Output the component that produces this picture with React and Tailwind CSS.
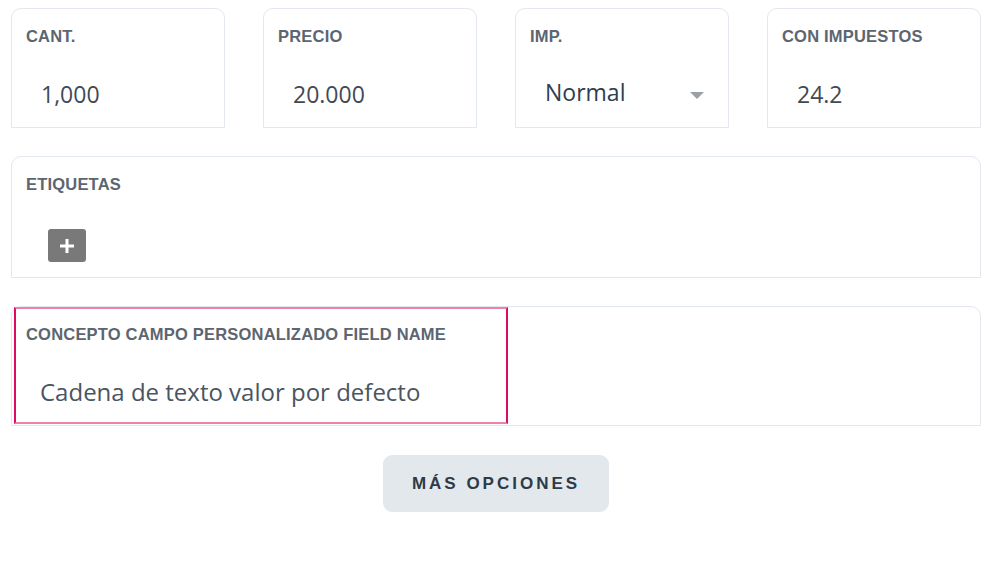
import React from "react";

const labelCls =
  "font-['Liberation_Sans',Arial,sans-serif] font-bold text-[16.5px] leading-[18px] tracking-[0.2px] text-[#5c6570] uppercase";
const valueCls =
  "font-['Open_Sans','Noto_Sans',sans-serif] text-[23px] leading-[28px] text-[#3f4a56]";

function Field({ label, value }) {
  return (
    <div className="h-[120px] rounded-t-[10px] border border-[#e2e8ee] bg-white px-[14px] pt-[18px]">
      <div className={labelCls}>{label}</div>
      <div className={`${valueCls} mt-[35px] pl-[15px]`}>{value}</div>
    </div>
  );
}

function SelectField() {
  return (
    <div className="h-[120px] rounded-t-[10px] border border-[#e2e8ee] bg-white px-[14px] pt-[18px]">
      <div className={labelCls}>IMP.</div>
      <div className="mt-[33px] flex items-center justify-between pl-[15px] pr-[10px]">
        <span className="font-['Open_Sans','Noto_Sans',sans-serif] text-[23px] leading-[28px] text-[#2c3e50]">
          Normal
        </span>
        <svg width="14" height="7" viewBox="0 0 14 7" className="mt-[6px]">
          <polygon points="0,0 14,0 7,7" fill="#9aa0a6" />
        </svg>
      </div>
    </div>
  );
}

export default function App() {
  return (
    <div className="w-[986px] h-[587px] bg-white pl-[11px] pr-[5px] pt-[8px]">
      <div className="grid grid-cols-4 gap-x-[38px]">
        <Field label="CANT." value="1,000" />
        <Field label="PRECIO" value="20.000" />
        <SelectField />
        <Field label="CON IMPUESTOS" value="24.2" />
      </div>

      <div className="mt-[28px] h-[122px] rounded-t-[10px] border border-[#e2e8ee] px-[14px] pt-[18px]">
        <div className={labelCls}>ETIQUETAS</div>
        <div className="mt-[36px] ml-[22px] flex h-[33px] w-[38px] items-center justify-center rounded-[3px] bg-[#797979]">
          <svg width="14" height="14" viewBox="0 0 14 14">
            <rect x="5.5" y="0" width="3" height="14" fill="#fff" />
            <rect x="0" y="5.5" width="14" height="3" fill="#fff" />
          </svg>
        </div>
      </div>

      <div className="mt-[28px] h-[120px] rounded-t-[10px] border border-[#e2e8ee] pl-[2px] pt-0">
        <div className="h-[117px] w-[494px] border-x-2 border-y-2 border-x-[#df0a62] border-y-[#ef80a9] px-[10px] pt-[16px]">
          <div className={labelCls}>CONCEPTO CAMPO PERSONALIZADO FIELD NAME</div>
          <div className="mt-[35px] pl-[14px] font-['Open_Sans','Noto_Sans',sans-serif] text-[24px] leading-[28px] text-[#4a5560]">
            Cadena de texto valor por defecto
          </div>
        </div>
      </div>

      <div className="mt-[29px] flex justify-center">
        <button className="h-[57px] w-[226px] rounded-[9px] bg-[#e3e8ed] font-['Liberation_Sans',Arial,sans-serif] text-[17px] font-bold tracking-[3px] text-[#2d3a48]">
          MÁS OPCIONES
        </button>
      </div>
    </div>
  );
}
